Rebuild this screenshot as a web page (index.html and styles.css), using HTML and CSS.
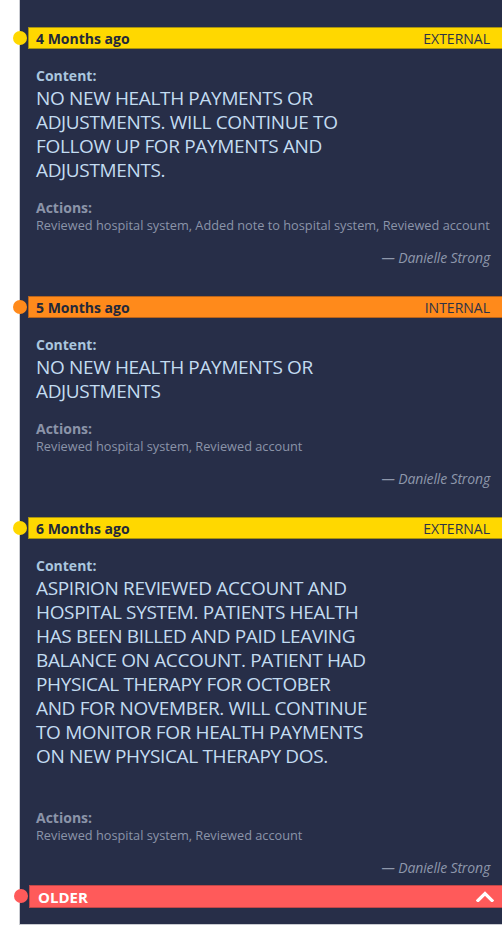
FILE: index.html
```html
<!DOCTYPE html>
<html>
<head>
<meta charset="utf-8">
<link rel="stylesheet" href="styles.css">
</head>
<body>
<div class="timeline">
  <div class="entry">
    <div class="entry-head external">
      <span class="dot"></span>
      <span class="when">4 Months ago</span>
      <span class="type">EXTERNAL</span>
    </div>
    <div class="entry-body">
      <div class="label">Content:</div>
      <div class="content">NO NEW HEALTH PAYMENTS OR ADJUSTMENTS. WILL CONTINUE TO FOLLOW UP FOR PAYMENTS AND ADJUSTMENTS.</div>
      <div class="label actions-label">Actions:</div>
      <div class="actions">Reviewed hospital system, Added note to hospital system, Reviewed account</div>
      <div class="author">— Danielle Strong</div>
    </div>
  </div>
  <div class="entry">
    <div class="entry-head internal">
      <span class="dot"></span>
      <span class="when">5 Months ago</span>
      <span class="type">INTERNAL</span>
    </div>
    <div class="entry-body">
      <div class="label">Content:</div>
      <div class="content">NO NEW HEALTH PAYMENTS OR ADJUSTMENTS</div>
      <div class="label actions-label">Actions:</div>
      <div class="actions">Reviewed hospital system, Reviewed account</div>
      <div class="author">— Danielle Strong</div>
    </div>
  </div>
  <div class="entry">
    <div class="entry-head external">
      <span class="dot"></span>
      <span class="when">6 Months ago</span>
      <span class="type">EXTERNAL</span>
    </div>
    <div class="entry-body">
      <div class="label">Content:</div>
      <div class="content">ASPIRION REVIEWED ACCOUNT AND HOSPITAL SYSTEM. PATIENTS HEALTH HAS BEEN BILLED AND PAID LEAVING BALANCE ON ACCOUNT. PATIENT HAD PHYSICAL THERAPY FOR OCTOBER AND FOR NOVEMBER. WILL CONTINUE TO MONITOR FOR HEALTH PAYMENTS ON NEW PHYSICAL THERAPY DOS.<br><br></div>
      <div class="label actions-label">Actions:</div>
      <div class="actions">Reviewed hospital system, Reviewed account</div>
      <div class="author">— Danielle Strong</div>
    </div>
  </div>
  <div class="older">
    <span class="dot"></span>
    <span class="older-label">OLDER</span>
    <svg class="chevron" width="18" height="11" viewBox="0 0 18 11"><polyline points="2,9.5 9,2.5 16,9.5" fill="none" stroke="#fff" stroke-width="3.2" stroke-linecap="square"/></svg>
  </div>
</div>
</body>
</html>
```
FILE: styles.css
```css
html, body {
  margin: 0;
  padding: 0;
  background: #ffffff;
}
body {
  font-family: "Open Sans", "Liberation Sans", sans-serif;
  width: 502px;
  height: 928px;
  overflow: hidden;
}
.timeline {
  margin-left: 19px;
  background: #272e48;
  border-left: 1px solid #c9cbd1;
  border-bottom: 1px solid #c9cbd1;
  padding-top: 27px;
  padding-bottom: 16px;
}
.entry + .entry {
  margin-top: 28px;
}
.entry-head {
  position: relative;
  margin-left: 8px;
  height: 22px;
  box-sizing: border-box;
  display: flex;
  align-items: center;
  justify-content: space-between;
  padding: 0 12px 0 7px;
  border: 1px solid;
  border-right: none;
  color: #23283a;
  font-size: 14px;
}
.entry-head.external {
  background: #ffd800;
  border-color: #a89410;
}
.entry-head.internal {
  background: #ff8a1b;
  border-color: #b8641c;
}
.entry-head .dot {
  position: absolute;
  left: -16px;
  top: 3px;
  width: 14px;
  height: 14px;
  border-radius: 50%;
}
.entry-head.external .dot { background: #ffd800; }
.entry-head.internal .dot { background: #ff8a1b; }
.when {
  font-weight: 700;
  font-size: 14px;
}
.type {
  font-size: 14px;
  color: #2e3348;
}
.entry-body {
  padding: 17px 12px 0 16px;
}
.label {
  font-weight: 700;
  font-size: 14px;
  line-height: 20px;
  color: #aac6df;
}
.content {
  font-size: 19px;
  letter-spacing: -0.35px;
  line-height: 24px;
  color: #c3dcf1;
  width: 336px;
}
.actions-label {
  margin-top: 17px;
  line-height: 18px;
  color: #8b94a9;
}
.actions {
  font-size: 12.75px;
  line-height: 16px;
  color: #8b94a9;
  white-space: nowrap;
}
.author {
  margin-top: 15px;
  text-align: right;
  font-style: italic;
  font-size: 14px;
  line-height: 20px;
  color: #8e97ab;
  letter-spacing: -0.15px;
}
.older {
  position: relative;
  margin-top: 7px;
  margin-left: 9px;
  height: 23px;
  box-sizing: border-box;
  background: #ff5a5a;
  border: 1px solid #c04848;
  border-right: none;
  display: flex;
  align-items: center;
  justify-content: space-between;
  padding: 0 8px 0 8px;
}
.older .dot {
  position: absolute;
  left: -16px;
  top: 3px;
  width: 14px;
  height: 14px;
  border-radius: 50%;
  background: #ff5a5a;
}
.older-label {
  color: #ffffff;
  font-weight: 700;
  font-size: 15px;
}
.chevron {
  display: block;
}
```
